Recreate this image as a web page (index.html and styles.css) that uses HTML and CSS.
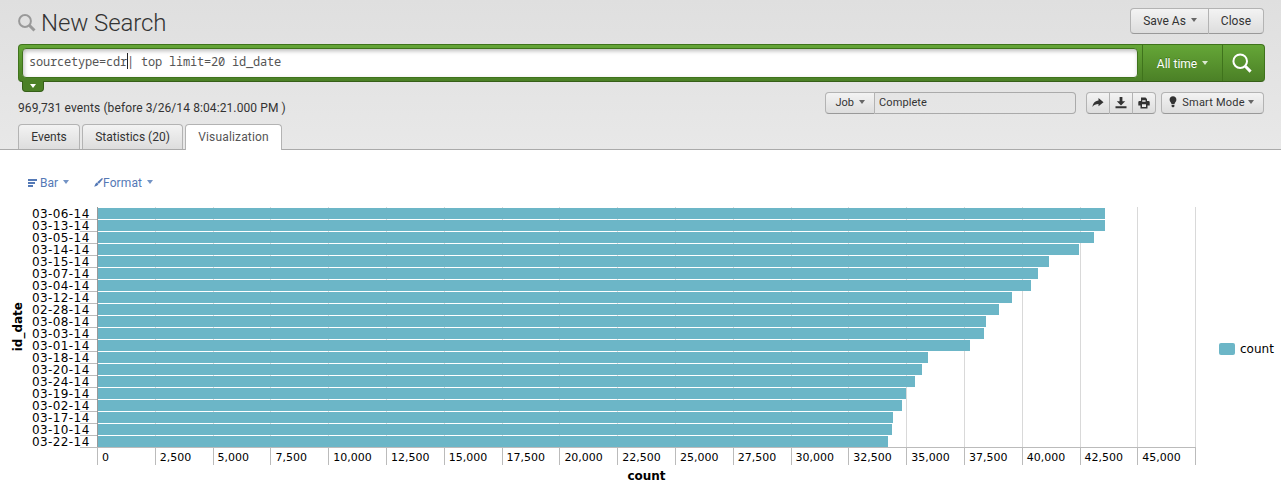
FILE: index.html
```html
<!DOCTYPE html>
<html lang="en">
<head>
    <meta charset="UTF-8">
    <meta name="viewport" content="width=device-width, initial-scale=1.0">
    <title>New Search</title>
    <link rel="stylesheet" href="styles.css">
</head>
<body>
    <header class="header">
        <div class="title-row">
            <h1>
                <svg class="title-icon" width="18" height="18" viewBox="0 0 18 18"><circle cx="7" cy="7" r="5.9" fill="none" stroke="#999" stroke-width="2"/><path d="M11.5 11.5L16.5 16.5" stroke="#999" stroke-width="3"/></svg>
                <span>New Search</span>
            </h1>
            <div class="btn-group">
                <button class="btn">Save As <i class="caret"></i></button>
                <button class="btn">Close</button>
            </div>
        </div>

        <div class="search-bar">
            <div class="search-input"><span>sourcetype=cdr</span><i class="cursor"></i><span>| top limit=20 id_date</span></div>
            <button class="time-range">All time <i class="caret"></i></button>
            <button class="search-btn">
                <svg width="20" height="20" viewBox="0 0 20 20"><circle cx="8.2" cy="8.2" r="6.8" fill="none" stroke="#fff" stroke-width="2"/><path d="M13.3 13.3L18.6 18.6" stroke="#fff" stroke-width="3"/></svg>
            </button>
        </div>
        <div class="search-toggle"><i class="caret"></i></div>

        <div class="info-row">
            <div class="event-count">969,731 events (before 3/26/14 8:04:21.000 PM )</div>
            <div class="job">
                <button class="btn-small">Job <i class="caret"></i></button>
                <span class="job-status">Complete</span>
            </div>
            <div class="job-actions">
                <button class="btn-small"><svg width="12" height="10" viewBox="0 0 12 10"><path d="M6.5 0L11.5 4.2L6.5 8.2V6C3.8 6 2 6.8 .4 9C.9 5.2 2.8 2.8 6.5 2.4Z" fill="#333"/></svg></button>
                <button class="btn-small"><svg width="12" height="12" viewBox="0 0 12 12"><path d="M4.6 0H7.4V4.2H10.2L6 8.5L1.8 4.2H4.6ZM.5 9.3H11.5V11.3H.5Z" fill="#333"/></svg></button>
                <button class="btn-small"><svg width="12" height="12" viewBox="0 0 12 12"><path d="M3 4V.5H7.5L9 2V4H10.5Q11.7 4 11.7 5.2V8.5H9.5V11.5H2.5V8.5H.3V5.2Q.3 4 1.5 4Z" fill="#333"/><path d="M4 7.3H8V10H4ZM4.2 3.2H7.6V4.8H4.2Z" fill="#eee"/></svg></button>
            </div>
            <button class="btn-small smart-mode"><svg width="8" height="12" viewBox="0 0 8 12"><path d="M4 .3C6.1 .3 7.4 1.8 7.4 3.7C7.4 5.3 5.8 6.5 5.4 8.2H2.6C2.2 6.5 .6 5.3 .6 3.7C.6 1.8 1.9 .3 4 .3ZM2.6 9H5.4V10.4L4.5 11.3H3.5L2.6 10.4Z" fill="#333"/></svg>Smart Mode <i class="caret"></i></button>
        </div>

        <nav class="tabs">
            <a class="tab">Events</a>
            <a class="tab">Statistics (20)</a>
            <a class="tab active">Visualization</a>
        </nav>
    </header>

    <div class="chart-controls">
        <a class="bar-type"><svg width="9" height="8" viewBox="0 0 9 8"><path d="M0 0H9V2H0ZM0 3H7V5H0ZM0 6H5V8H0Z" fill="#5479b6"/></svg>Bar <i class="caret"></i></a>
        <a class="format"><svg width="9" height="9" viewBox="0 0 9 9"><path d="M8 0L9 .8L5 5.8L3.2 4.3ZM2.9 4.6L4.5 6.1C3.8 7.9 2 8.5 0 8.4C1.3 7.4 1.1 5.3 2.9 4.6Z" fill="#5479b6"/></svg>Format <i class="caret"></i></a>
    </div>

    <div class="chart">
        <div class="y-title"><span>id_date</span></div>
        <div class="plot">
            <div class="grid-lines" id="gridLines"></div>
            <div class="rows" id="rows"></div>
            <div class="x-axis" id="xAxis"></div>
            <div class="x-title">count</div>
        </div>
        <div class="legend"><i class="swatch"></i>count</div>
    </div>

    <script>
        var axisMax = 47500;
        var step = 2500;
        var data = [
            ["03-06-14", 43607], ["03-13-14", 43607], ["03-05-14", 43131], ["03-14-14", 42482],
            ["03-15-14", 41184], ["03-07-14", 40708], ["03-04-14", 40405], ["03-12-14", 39583],
            ["02-28-14", 39021], ["03-08-14", 38459], ["03-03-14", 38372], ["03-01-14", 37766],
            ["03-18-14", 35949], ["03-20-14", 35690], ["03-24-14", 35387], ["03-19-14", 34998],
            ["03-02-14", 34825], ["03-17-14", 34435], ["03-10-14", 34392], ["03-22-14", 34190]
        ];

        var rows = "";
        data.forEach(function (d) {
            var width = d[1] / axisMax * 100;
            rows += '<div class="row"><span class="label">' + d[0] + '</span><span class="tick"></span>' +
                '<div class="track"><div class="bar" style="width: ' + width + '%"></div></div></div>';
        });
        document.getElementById("rows").innerHTML = rows;

        var lines = "";
        var ticks = "";
        for (var v = 0; v < axisMax; v += step) {
            lines += "<i></i>";
            ticks += "<span>" + v.toLocaleString("en-US") + "</span>";
        }
        document.getElementById("gridLines").innerHTML = lines;
        document.getElementById("xAxis").innerHTML = ticks;
    </script>
</body>
</html>
```
FILE: styles.css
```css
* {
    box-sizing: border-box;
}
body {
    font-family: Roboto, Arial, sans-serif;
    font-size: 12px;
    margin: 0;
    color: #333;
    background-color: #fff;
    overflow: hidden;
}
button {
    font: inherit;
    color: inherit;
    margin: 0;
    cursor: pointer;
}
.header {
    display: flex;
    flex-direction: column;
    height: 150px;
    padding: 8px 16px 0 18px;
    background: linear-gradient(#dfdfdf, #e8e8e8);
    border-bottom: 1px solid #aaa;
}
.title-row {
    display: flex;
    justify-content: space-between;
    height: 36px;
    padding-right: 1px;
    flex-shrink: 0;
}
h1 {
    display: flex;
    align-items: flex-start;
    gap: 5px;
    margin: 0;
    font-size: 24px;
    font-weight: 300;
    line-height: 30px;
    letter-spacing: -0.1px;
}
.title-icon {
    margin-top: 6px;
}
.caret {
    display: inline-block;
    margin-left: 2px;
    border: 3px solid transparent;
    border-top: 4px solid #666;
    border-bottom: 0;
    vertical-align: 2px;
}
.btn-group {
    display: flex;
    height: 26px;
}
.btn, .btn-small {
    padding: 0 12px;
    border: 1px solid #b3b3b3;
    border-bottom-color: #999;
    background: linear-gradient(#f3f3f3, #dddddd);
    white-space: nowrap;
}
.btn .caret, .time-range .caret, .chart-controls .caret {
    vertical-align: 3px;
}
.btn:first-child {
    padding-right: 11px;
}
.btn:first-child, .btn-small:first-child {
    border-radius: 4px 0 0 4px;
}
.btn:last-child, .btn-small:last-child {
    border-radius: 0 4px 4px 0;
}
.btn + .btn, .btn-small + .btn-small {
    border-left: 0;
}
.search-bar {
    display: flex;
    height: 38px;
    border: 1px solid #3f731c;
    border-bottom: 1px solid #365f18;
    border-radius: 4px;
    background: linear-gradient(#65a637, #4b8026);
    flex-shrink: 0;
}
.search-input {
    display: flex;
    flex: 1;
    margin: 3px 4px 3px 3px;
    padding: 0 6px;
    border: 1px solid #3f731c;
    border-radius: 4px;
    background-color: #fff;
    box-shadow: inset 1px 2px 4px #bbb;
    font-family: "Noto Sans Mono", "Droid Sans Mono", "DejaVu Sans Mono", monospace;
    font-size: 12px;
    line-height: 26px;
    letter-spacing: -0.2px;
    color: #555;
    white-space: pre;
}
.cursor {
    width: 1px;
    height: 16px;
    margin: 4px -1px 0 0;
    background-color: #222;
}
.time-range, .search-btn {
    padding: 1px 0 0;
    border: 0;
    border-left: 1px solid #3f731c;
    background: none;
    color: #fff;
    text-shadow: 0 -1px 0 #3f731c;
}
.time-range {
    width: 80px;
}
.time-range .caret {
    border-top-color: #dbe8d2;
}
.search-toggle .caret {
    border-top-color: #fff;
}
.search-btn {
    width: 42px;
    padding: 0 3px 0 0;
}
.search-btn svg {
    display: block;
    margin: 0 auto;
}
.search-toggle {
    display: flex;
    justify-content: center;
    width: 22px;
    height: 11px;
    margin: -1px 0 0 4px;
    padding-top: 3px;
    border: 1px solid #365f18;
    border-top: 0;
    border-radius: 0 0 4px 4px;
    background-color: #4b8026;
    flex-shrink: 0;
}
.search-toggle .caret {
    height: 4px;
    margin: 0;
}
.info-row {
    display: flex;
    height: 32px;
    padding-right: 1px;
    flex-shrink: 0;
}
.event-count {
    flex: 1;
    padding-top: 9px;
    line-height: 14px;
    letter-spacing: 0.1px;
    white-space: nowrap;
}
.btn-small {
    height: 22px;
    padding: 0 10px;
    font-size: 11px;
}
.job {
    display: flex;
    width: 251px;
    height: 22px;
    margin-right: 10px;
}
.job .btn-small {
    width: 50px;
    padding: 0 0 2px;
    border-radius: 4px 0 0 4px;
}
.job-status {
    flex: 1;
    padding-left: 4px;
    border: 1px solid #aaa;
    border-left: 0;
    border-radius: 0 4px 4px 0;
    font-size: 11px;
    line-height: 19px;
    letter-spacing: 0.1px;
}
.job-actions {
    display: flex;
    margin-right: 5px;
}
.job-actions .btn-small {
    display: flex;
    align-items: center;
    justify-content: center;
    width: 23px;
    padding: 0;
}
.job-actions .btn-small:first-child {
    width: 24px;
}
.smart-mode.btn-small {
    width: 103px;
    padding: 0 2px 2px 0;
    border-radius: 4px;
    letter-spacing: 0.2px;
}
.smart-mode .caret {
    margin-left: 0;
}
.smart-mode svg {
    margin-right: 5px;
    vertical-align: -2px;
}
.tabs {
    display: flex;
    gap: 2px;
    height: 25px;
    flex-shrink: 0;
}
.tab {
    width: 62px;
    height: 25px;
    border: 1px solid #b3b3b3;
    border-bottom: 0;
    border-radius: 4px 4px 0 0;
    background: linear-gradient(#f3f3f3, #dddddd);
    line-height: 24px;
    text-align: center;
}
.tab:nth-child(2) {
    width: 101px;
}
.tab.active {
    width: 97px;
    height: 26px;
    background: #fff;
    color: #555;
    letter-spacing: 0.15px;
}
.chart-controls {
    display: flex;
    gap: 25px;
    height: 57px;
    padding: 26px 0 0 28px;
    line-height: 14px;
    color: #5479b6;
}
.bar-type svg {
    margin-right: 3px;
}
.format {
    letter-spacing: 0.1px;
}
.chart-controls .caret {
    border-top-color: #7393c5;
}
.chart {
    display: flex;
    height: 289px;
    font-family: "DejaVu Sans", Verdana, sans-serif;
    color: #000;
}
.y-title {
    display: flex;
    align-items: center;
    justify-content: center;
    width: 32px;
    height: 240px;
    padding-left: 4px;
    font-weight: bold;
}
.y-title span {
    writing-mode: vertical-rl;
    transform: rotate(180deg);
}
.plot {
    display: grid;
    grid-template: 241px 17px 1fr / 65px 1099px;
}
.grid-lines {
    display: flex;
    grid-area: 1 / 2;
    border-right: 1px solid #d9d9d9;
}
.grid-lines i {
    flex: 1;
    border-left: 1px solid #d9d9d9;
}
.grid-lines i:first-child {
    border-color: #999;
}
.rows {
    grid-area: 1 / 1 / 2 / 3;
    padding-top: 1px;
}
.row {
    display: flex;
    height: 12px;
}
.label {
    width: 48px;
    font-size: 12px;
    line-height: 12px;
    letter-spacing: 0.4px;
    white-space: nowrap;
}
.tick {
    width: 17px;
    border-bottom: 1px solid #bbb;
}
/* thin gap between bars lets the grid lines show through */
.track {
    width: 1098px;
    padding-left: 1px;
}
.row:last-child .track {
    width: 1099px;
    border-bottom: 1px solid #bbb;
}
.bar {
    height: 11px;
    background-color: #6cb6c7;
}
.x-axis {
    display: flex;
    grid-area: 2 / 2;
    border-right: 1px solid #bbb;
}
.x-axis span {
    flex: 1;
    width: 0;
    padding: 3px 0 0 4px;
    border-left: 1px solid #bbb;
    font-size: 11px;
    line-height: 13px;
    white-space: nowrap;
}
.x-title {
    grid-area: 3 / 2;
    padding-top: 4px;
    font-weight: bold;
    line-height: 14px;
    text-align: center;
}
.legend {
    display: flex;
    align-items: center;
    gap: 5px;
    height: 284px;
    padding-left: 23px;
}
.swatch {
    width: 16px;
    height: 12px;
    border-radius: 2px;
    background-color: #6cb6c7;
}
```
